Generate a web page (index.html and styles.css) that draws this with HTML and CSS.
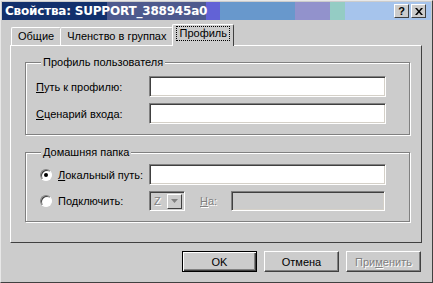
FILE: index.html
```html
<!DOCTYPE html>
<html lang="ru">
<head>
  <meta charset="UTF-8">
  <title>Свойства: SUPPORT_388945a0</title>
  <link rel="stylesheet" href="styles.css">
</head>
<body>
  <div class="window">
    <!-- Title bar -->
    <div class="titlebar">
      <span class="title">Свойства: SUPPORT_388945a0</span>
      <div class="title-buttons">
        <span class="tbtn help">?</span>
        <span class="tbtn close">
          <svg width="8" height="7" viewBox="0 0 8 7"><path d="M0 0h2l2 2.5L6 0h2L5 3.5 8 7H6L4 4.5 2 7H0l3-3.5z" fill="#000"/></svg>
        </span>
      </div>
    </div>

    <div class="content">
      <!-- Tabs -->
      <div class="tabs">
        <span class="tab">Общие</span>
        <span class="tab">Членство в группах</span>
        <span class="tab active"><span class="focus">Профиль</span></span>
      </div>

      <div class="panel">
        <fieldset class="group">
          <legend>Профиль пользователя</legend>
          <div class="form-grid">
            <label><u>П</u>уть к профилю:</label>
            <span class="input"></span>
            <label><u>С</u>ценарий входа:</label>
            <span class="input"></span>
          </div>
        </fieldset>

        <fieldset class="group home">
          <legend>Домашняя папка</legend>
          <div class="form-grid">
            <label class="radio-label"><span class="radio checked"></span><span><u>Л</u>окальный путь:</span></label>
            <span class="input"></span>
            <label class="radio-label"><span class="radio"></span><span>По<u>д</u>ключить:</span></label>
            <div class="connect-row">
              <span class="combo"><span class="combo-value">Z</span><span class="combo-arrow"><svg width="7" height="4" viewBox="0 0 7 4"><path d="M0 0h7L3.5 4z" fill="#808080"/></svg></span></span>
              <span class="disabled-text"><u>Н</u>а:</span>
              <span class="input disabled"></span>
            </div>
          </div>
        </fieldset>
      </div>

      <!-- Buttons -->
      <div class="buttons">
        <button class="btn default">OK</button>
        <button class="btn">Отмена</button>
        <button class="btn disabled">При<u>м</u>енить</button>
      </div>
    </div>
  </div>
</body>
</html>
```

FILE: styles.css
```css
body {
  margin: 0;
  font-family: "Liberation Sans", Arial, sans-serif;
  font-size: 11px;
  color: #000;
  background: #cccccc;
}
.window {
  width: 433px;
  height: 283px;
  box-sizing: border-box;
  border: 1px solid;
  border-color: #e8e8e8 #404040 #404040 #e8e8e8;
  padding: 1px;
  background: #cccccc;
  display: flex;
  flex-direction: column;
}
.titlebar {
  height: 18px;
  display: flex;
  align-items: center;
  justify-content: space-between;
  padding: 0 5px 0 3px;
  background: linear-gradient(to right,
    #12306c 0, #12306c 105px,
    #4e5a8e 105px, #4e5a8e 204px,
    #6262d6 204px, #6262d6 218px,
    #6898cc 218px, #6898cc 293px,
    #9292cc 293px, #9292cc 328px,
    #94ccc4 328px, #94ccc4 343px,
    #a6c4ec 343px);
}
.title {
  color: #fff;
  font-family: "DejaVu Sans", Verdana, sans-serif;
  font-weight: bold;
  font-size: 12px;
  letter-spacing: -0.2px;
}
.title-buttons {
  display: flex;
  gap: 2px;
}
.tbtn {
  width: 15px;
  height: 14px;
  box-sizing: border-box;
  background: #cccccc;
  border: 1px solid;
  border-color: #fff #404040 #404040 #fff;
  display: flex;
  align-items: center;
  justify-content: center;
  font-weight: bold;
  font-size: 11px;
  line-height: 1;
}
.content {
  flex: 1;
  padding: 4px 9px 0 8px;
  display: flex;
  flex-direction: column;
}
.tabs {
  display: flex;
  align-items: flex-end;
  height: 21px;
  padding-left: 1px;
}
.tab {
  height: 18px;
  box-sizing: border-box;
  padding: 2px 6px 0;
  border: 1px solid;
  border-bottom: none;
  border-color: #fff #404040 #fff #fff;
  border-radius: 2px 2px 0 0;
  margin-right: -1px;
}
.tab.active {
  height: 22px;
  padding: 2px 4px 0;
  margin: 0 -1px -1px 0;
  position: relative;
  background: #cccccc;
  z-index: 1;
}
.focus {
  display: inline-block;
  padding: 0 2px;
  outline: 1px dotted #000;
  line-height: 13px;
}
.panel {
  height: 198px;
  box-sizing: border-box;
  border: 1px solid;
  border-color: #fff #404040 #404040 #fff;
  padding: 10px 11px 0 14px;
}
.group {
  margin: 0;
  padding: 7px 10px 10px 9px;
  border: 1px solid #808080;
  box-shadow: inset 1px 1px #fff, 1px 1px #fff;
}
.group legend {
  padding: 0 2px;
  margin-left: 6px;
  background: #cccccc;
  line-height: 13px;
}
.home {
  margin-top: 11px;
  padding-top: 5px;
  padding-bottom: 10px;
}
.form-grid {
  display: grid;
  grid-template-columns: 114px 237px;
  row-gap: 6px;
  align-items: center;
}
.form-grid label {
  padding-left: 1px;
}
.input {
  display: block;
  height: 21px;
  box-sizing: border-box;
  background: #fff;
  border: 1px solid;
  border-color: #808080 #fff #fff #808080;
  box-shadow: inset 1px 1px #404040, inset -1px -1px #d4d0c8;
}
.input.disabled {
  background: #cccccc;
  width: 154px;
  height: 20px;
}
.form-grid .radio-label {
  display: flex;
  align-items: center;
  gap: 6px;
  padding-left: 5px;
}
.radio {
  width: 12px;
  height: 12px;
  box-sizing: border-box;
  border-radius: 50%;
  background: #fff;
  border: 1px solid;
  border-color: #808080 #fff #fff #808080;
  box-shadow: inset 1px 1px #404040;
  position: relative;
}
.radio.checked::after {
  content: "";
  position: absolute;
  left: 3px;
  top: 3px;
  width: 4px;
  height: 4px;
  border-radius: 50%;
  background: #000;
}
.connect-row {
  display: flex;
  align-items: center;
}
.combo {
  width: 36px;
  height: 20px;
  box-sizing: border-box;
  border: 1px solid;
  border-color: #808080 #fff #fff #808080;
  box-shadow: inset 1px 1px #404040;
  display: flex;
  align-items: center;
  padding: 2px 2px 2px 4px;
  justify-content: space-between;
  color: #808080;
  text-shadow: 1px 1px #fff;
}
.combo-arrow {
  width: 15px;
  height: 15px;
  box-sizing: border-box;
  border: 1px solid;
  border-color: #fff #404040 #404040 #fff;
  display: flex;
  align-items: center;
  justify-content: center;
}
.disabled-text {
  color: #808080;
  text-shadow: 1px 1px #fff;
  margin: 0 14px 0 15px;
}
.buttons {
  display: flex;
  justify-content: flex-end;
  gap: 7px;
  margin-top: 8px;
  margin-right: 1px;
}
.btn {
  width: 75px;
  height: 21px;
  box-sizing: border-box;
  font-family: inherit;
  font-size: 11px;
  background: #cccccc;
  border: 1px solid;
  border-color: #fff #404040 #404040 #fff;
  box-shadow: inset -1px -1px #808080;
  padding: 0;
}
.btn.default {
  border: 1px solid #000;
  box-shadow: inset 1px 1px #fff, inset -1px -1px #404040, inset -2px -2px #808080;
}
.btn.disabled {
  color: #808080;
  text-shadow: 1px 1px #fff;
}
```
